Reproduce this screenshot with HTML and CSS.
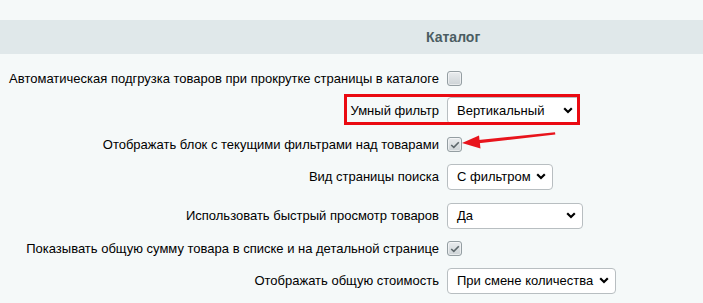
FILE: index.html
```html
<!DOCTYPE html>
<html lang="ru">
<head>
<meta charset="utf-8">
<title>Каталог</title>
<link rel="stylesheet" href="styles.css">
</head>
<body>
<div class="page">
  <div class="section-head"><span class="section-title">Каталог</span></div>
  <div class="rows">
    <div class="row row-cb first">
      <div class="lbl">Автоматическая подгрузка товаров при прокрутке страницы в каталоге</div>
      <div class="val"><span class="cb"></span></div>
    </div>
    <div class="row row-hl">
      <div class="lbl">Умный фильтр</div>
      <div class="val">
        <div class="sel sel-vert"><span>Вертикальный</span><svg class="chev" width="10" height="7" viewBox="0 0 10 7"><path d="M1.2 1.3 L5 5 L8.8 1.3" fill="none" stroke="#000" stroke-width="2.2"/></svg></div>
      </div>
    </div>
    <div class="row row-cb">
      <div class="lbl">Отображать блок с текущими фильтрами над товарами</div>
      <div class="val"><span class="cb checked"><svg width="10" height="8" viewBox="0 0 10 8"><path d="M1.2 4 L3.8 6.4 L8.8 1.2" fill="none" stroke="#5d676b" stroke-width="1.6"/></svg></span></div>
    </div>
    <div class="row row-sel">
      <div class="lbl">Вид страницы поиска</div>
      <div class="val">
        <div class="sel sel-search"><span>С фильтром</span><svg class="chev" width="10" height="7" viewBox="0 0 10 7"><path d="M1.2 1.3 L5 5 L8.8 1.3" fill="none" stroke="#000" stroke-width="2.2"/></svg></div>
      </div>
    </div>
    <div class="row row-sel">
      <div class="lbl">Использовать быстрый просмотр товаров</div>
      <div class="val">
        <div class="sel sel-quick"><span>Да</span><svg class="chev" width="10" height="7" viewBox="0 0 10 7"><path d="M1.2 1.3 L5 5 L8.8 1.3" fill="none" stroke="#000" stroke-width="2.2"/></svg></div>
      </div>
    </div>
    <div class="row row-cb">
      <div class="lbl">Показывать общую сумму товара в списке и на детальной странице</div>
      <div class="val"><span class="cb checked"><svg width="10" height="8" viewBox="0 0 10 8"><path d="M1.2 4 L3.8 6.4 L8.8 1.2" fill="none" stroke="#5d676b" stroke-width="1.6"/></svg></span></div>
    </div>
    <div class="row row-sel">
      <div class="lbl">Отображать общую стоимость</div>
      <div class="val">
        <div class="sel sel-total"><span>При смене количества</span><svg class="chev" width="10" height="7" viewBox="0 0 10 7"><path d="M1.2 1.3 L5 5 L8.8 1.3" fill="none" stroke="#000" stroke-width="2.2"/></svg></div>
      </div>
    </div>
  </div>
  <div class="hl-frame"></div>
  <svg class="arrow" width="100" height="20" viewBox="0 0 100 20">
    <path d="M14 9.2 L93 1.2 L93.3 3.6 L14.6 12.6 Z" fill="#e8141c"/>
    <path d="M0 12 L17 4.5 L18.5 17.5 Z" fill="#e8141c"/>
  </svg>
</div>
</body>
</html>
```

FILE: styles.css
```css
html, body {
  margin: 0;
  padding: 0;
}
body {
  background: #f5f9f9;
  font-family: Arial, "Liberation Sans", Helvetica, sans-serif;
  font-size: 13px;
  color: #000;
}
.page {
  position: relative;
  width: 703px;
  height: 303px;
  overflow: hidden;
}
.section-head {
  margin-top: 20px;
  height: 34px;
  background: #e0e8ea;
  display: flex;
  align-items: center;
  padding-left: 426px;
}
.section-title {
  font-weight: bold;
  font-size: 14px;
  color: #4b5d63;
}
.rows {
  display: flex;
  flex-direction: column;
  gap: 12px;
  padding-top: 17px;
}
.row {
  display: grid;
  grid-template-columns: 439px 1fr;
  column-gap: 8px;
  align-items: center;
}
.row-cb { height: 14px; }
.row-hl { height: 30px; margin-top: -2px; }
.row-sel { height: 27px; }
.lbl {
  text-align: right;
  white-space: nowrap;
  line-height: 15px;
}
.val {
  display: flex;
  align-items: center;
}
.cb {
  box-sizing: border-box;
  width: 15px;
  height: 15px;
  border: 1px solid #949ea2;
  border-radius: 3px;
  background: linear-gradient(#e9ecee, #cdd3d6);
  box-shadow: inset 0 0 0 1px rgba(255,255,255,0.5);
  display: flex;
  align-items: center;
  justify-content: center;
}
.sel {
  box-sizing: border-box;
  height: 26px;
  background: #fff;
  border: 1px solid #b8bec1;
  border-radius: 4px;
  display: flex;
  align-items: center;
  justify-content: space-between;
  padding: 0 6px 0 9px;
  font-size: 13px;
}
.chev { flex: none; }
.sel-vert { width: 133px; height: 27px; }
.sel-search { width: 106px; }
.sel-quick { width: 136px; }
.sel-total { width: 169px; }
.hl-frame {
  position: absolute;
  left: 344px;
  top: 94px;
  width: 236px;
  height: 31px;
  box-sizing: border-box;
  border: 3px solid #ea0a12;
}
.arrow {
  position: absolute;
  left: 462px;
  top: 131px;
}
```
